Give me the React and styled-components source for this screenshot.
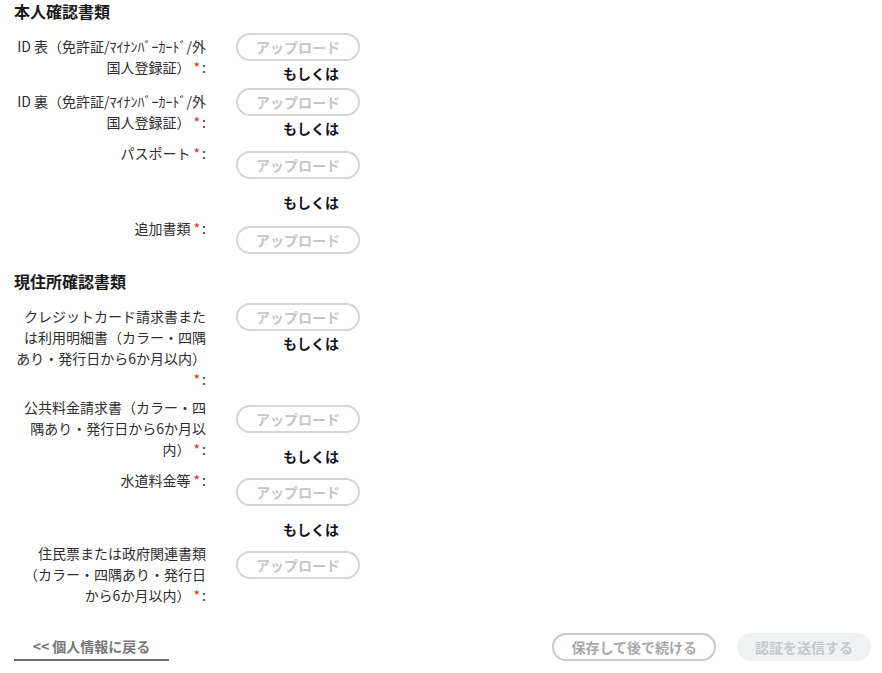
import React from 'react'
import styled, { createGlobalStyle } from 'styled-components';

const GlobalStyle = createGlobalStyle`
    body {
        margin: 0;
        background: #fff;
        font-family: "Noto Sans CJK JP", "Noto Sans", sans-serif;
        color: #2b2b2b;
    }
`;

const identityRows = [
    { label: 'ID 表（免許証/ﾏｲﾅﾝﾊﾞｰｶｰﾄﾞ/外国人登録証）', tight: true, or: true, mt: 11 },
    { label: 'ID 裏（免許証/ﾏｲﾅﾝﾊﾞｰｶｰﾄﾞ/外国人登録証）', tight: true, or: true, mt: 4 },
    { label: 'パスポート', or: true, mt: 4 },
    { label: '追加書類', mt: 5 },
];

const addressRows = [
    { label: 'クレジットカード請求書または利用明細書（カラー・四隅あり・発行日から6か月以内）', tight: true, or: true, mt: 11 },
    { label: '公共料金請求書（カラー・四隅あり・発行日から6か月以内）', or: true, mt: 7 },
    { label: '水道料金等', or: true, mt: 3 },
    { label: '住民票または政府関連書類（カラー・四隅あり・発行日から6か月以内）', mt: 3 },
];

export default function App() {
    return (
        <Page>
            <GlobalStyle />
            <SectionTitle $mt={0}>本人確認書類</SectionTitle>
            {identityRows.map((row) => <UploadRow key={row.label} {...row} />)}
            <SectionTitle $mt={16}>現住所確認書類</SectionTitle>
            {addressRows.map((row) => <UploadRow key={row.label} {...row} />)}
            <Footer>
                <BackLink href="#">&lt;&lt; 個人情報に戻る</BackLink>
                <Actions>
                    <SaveButton type="button">保存して後で続ける</SaveButton>
                    <SubmitButton type="button" disabled>認証を送信する</SubmitButton>
                </Actions>
            </Footer>
        </Page>
    );
}

function UploadRow(props) {
    const { label, tight, or, mt } = props;
    return (
        <Row $mt={mt}>
            <Label $pad={tight ? 3 : 0}>
                {label} <Req>*</Req>:
            </Label>
            <Field $pad={tight ? 0 : 8}>
                <UploadButton type="button">アップロード</UploadButton>
                {or && <Or $mt={tight ? 2 : 13}>もしくは</Or>}
            </Field>
        </Row>
    );
}

const Page = styled.div`
    padding: 0 11px 12px 14px;
`;

const SectionTitle = styled.h3`
    margin: ${props => props.$mt}px 0 0;
    font-size: 16px;
    line-height: 22px;
    font-weight: 700;
    color: #1a1a1a;
`;

const Row = styled.div`
    display: flex;
    align-items: flex-start;
    margin-top: ${props => props.$mt}px;
`;

const Label = styled.label`
    width: 192px;
    flex-shrink: 0;
    padding-top: ${props => props.$pad}px;
    text-align: right;
    font-size: 14px;
    line-height: 21px;
    color: #2e2e2e;
`;

const Req = styled.span`
    margin-right: 2px;
    color: #e8232b;
`;

const Field = styled.div`
    display: flex;
    flex-direction: column;
    align-items: flex-start;
    margin-left: 30px;
    padding-top: ${props => props.$pad}px;
`;

const UploadButton = styled.button`
    width: 124px;
    height: 28px;
    padding: 0;
    border: 2px solid #d5d5d5;
    border-radius: 14px;
    background: #fff;
    font-family: inherit;
    font-size: 14px;
    font-weight: 700;
    color: #c6c6c6;
    cursor: pointer;
`;

const Or = styled.div`
    margin-top: ${props => props.$mt}px;
    padding-left: 47px;
    font-size: 14px;
    line-height: 21px;
    font-weight: 700;
    color: #151520;
`;

const Footer = styled.div`
    display: flex;
    justify-content: space-between;
    align-items: flex-start;
    margin-top: 27px;
`;

const BackLink = styled.a`
    display: block;
    width: 155px;
    box-sizing: border-box;
    height: 28px;
    line-height: 26px;
    text-align: center;
    font-size: 14px;
    font-weight: 700;
    color: #787878;
    text-decoration: none;
    border-bottom: 2px solid #6f6f6f;
`;

const Actions = styled.div`
    display: flex;
    gap: 21px;
`;

const SaveButton = styled.button`
    height: 28px;
    padding: 0 17px;
    border: 2px solid #c9c9c9;
    border-radius: 14px;
    background: #fff;
    font-family: inherit;
    font-size: 14px;
    font-weight: 700;
    color: #a8a8a8;
`;

const SubmitButton = styled.button`
    height: 28px;
    padding: 0 18px;
    border: none;
    border-radius: 14px;
    background: #eff1f3;
    font-family: inherit;
    font-size: 14px;
    font-weight: 700;
    color: #c4c7cb;
`;
